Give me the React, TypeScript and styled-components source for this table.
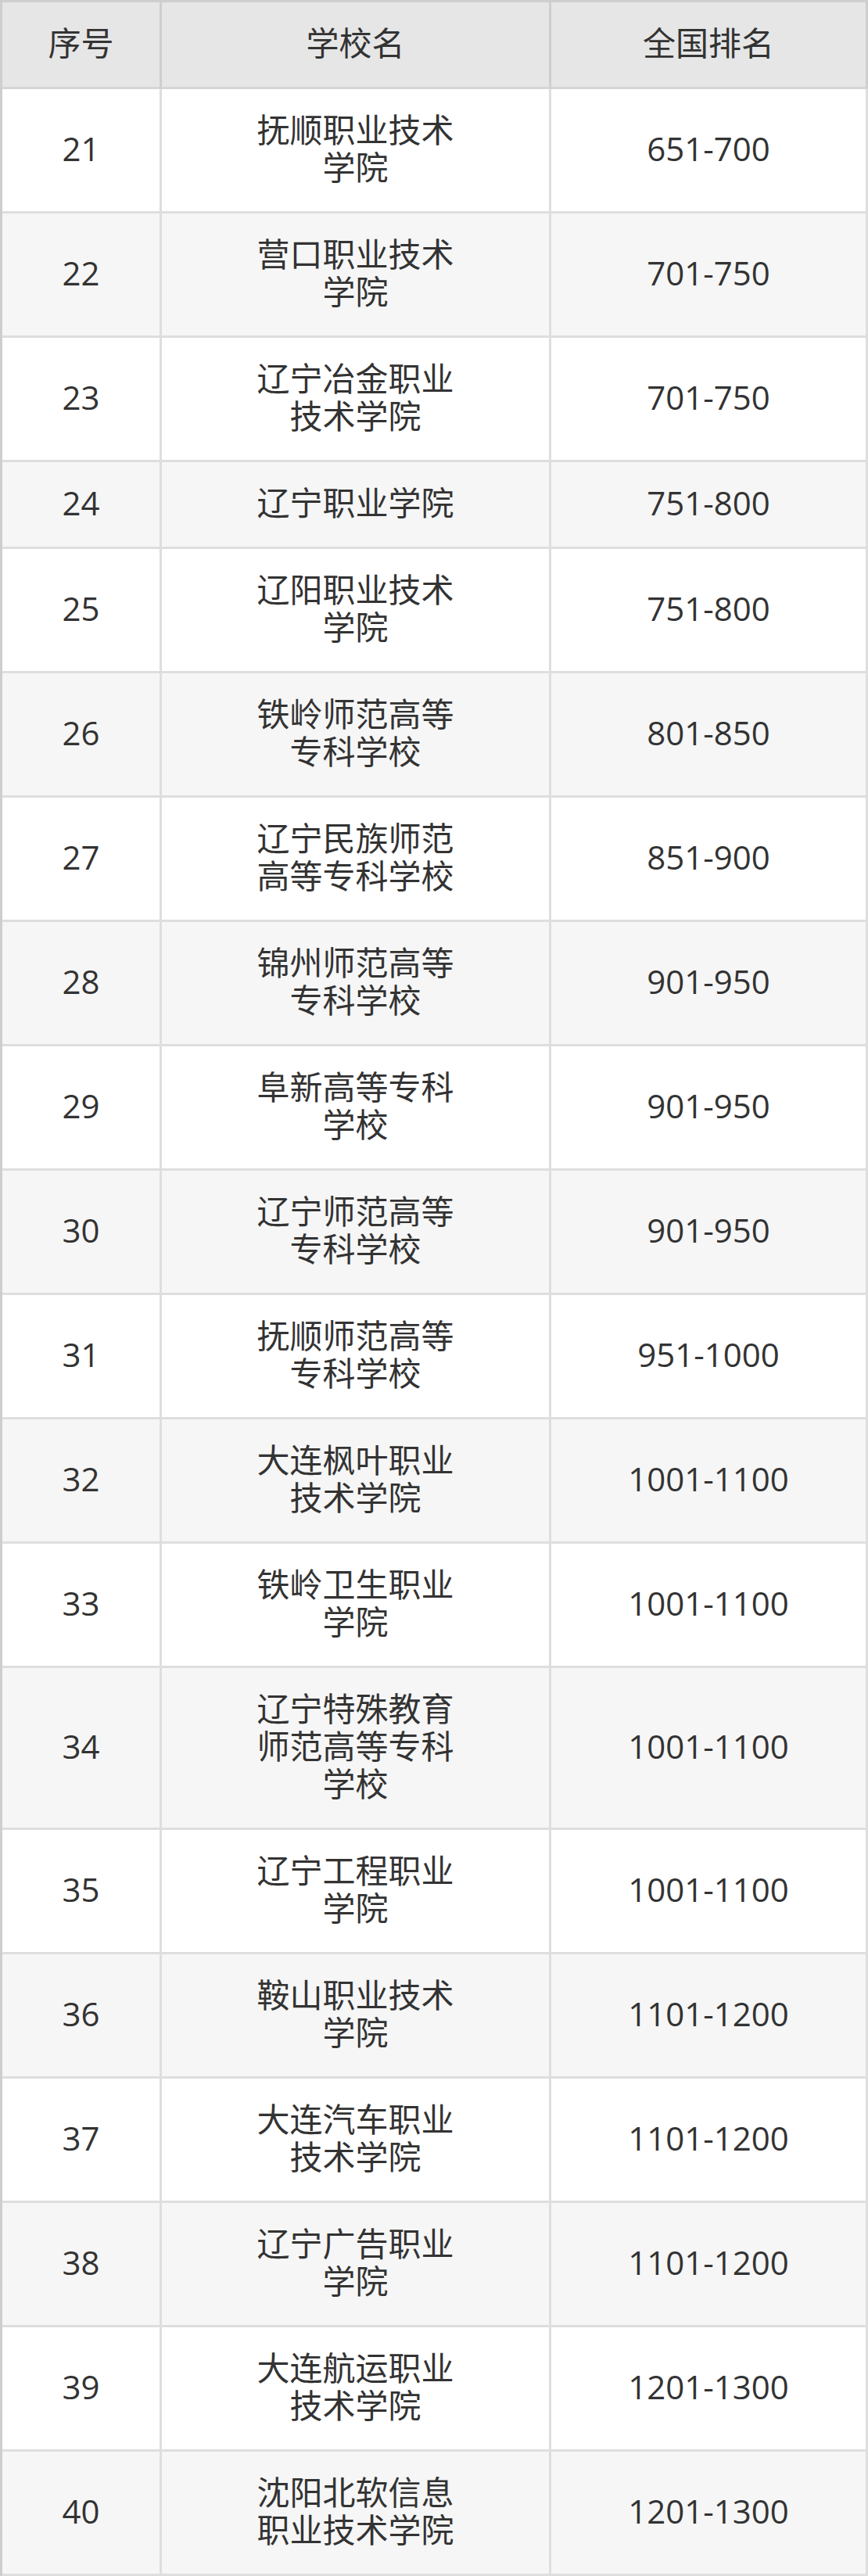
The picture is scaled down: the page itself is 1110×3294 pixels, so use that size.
import styled, { createGlobalStyle } from "styled-components";

interface IRow {
    no: number;
    name: string;
    rank: string;
}

const rows: IRow[] = [
    { no: 21, name: '抚顺职业技术学院', rank: '651-700' },
    { no: 22, name: '营口职业技术学院', rank: '701-750' },
    { no: 23, name: '辽宁冶金职业技术学院', rank: '701-750' },
    { no: 24, name: '辽宁职业学院', rank: '751-800' },
    { no: 25, name: '辽阳职业技术学院', rank: '751-800' },
    { no: 26, name: '铁岭师范高等专科学校', rank: '801-850' },
    { no: 27, name: '辽宁民族师范高等专科学校', rank: '851-900' },
    { no: 28, name: '锦州师范高等专科学校', rank: '901-950' },
    { no: 29, name: '阜新高等专科学校', rank: '901-950' },
    { no: 30, name: '辽宁师范高等专科学校', rank: '901-950' },
    { no: 31, name: '抚顺师范高等专科学校', rank: '951-1000' },
    { no: 32, name: '大连枫叶职业技术学院', rank: '1001-1100' },
    { no: 33, name: '铁岭卫生职业学院', rank: '1001-1100' },
    { no: 34, name: '辽宁特殊教育师范高等专科学校', rank: '1001-1100' },
    { no: 35, name: '辽宁工程职业学院', rank: '1001-1100' },
    { no: 36, name: '鞍山职业技术学院', rank: '1101-1200' },
    { no: 37, name: '大连汽车职业技术学院', rank: '1101-1200' },
    { no: 38, name: '辽宁广告职业学院', rank: '1101-1200' },
    { no: 39, name: '大连航运职业技术学院', rank: '1201-1300' },
    { no: 40, name: '沈阳北软信息职业技术学院', rank: '1201-1300' },
];

export default function App() {
    return (
        <>
            <GlobalStyle />
            <Table>
                <colgroup>
                    <col style={{ width: 204 }} />
                    <col style={{ width: 498 }} />
                    <col />
                </colgroup>
                <thead>
                    <tr>
                        <Th>序号</Th>
                        <Th>学校名</Th>
                        <Th>全国排名</Th>
                    </tr>
                </thead>
                <tbody>
                    {rows.map((r, i) => (
                        <Tr key={r.no} striped={i % 2 === 1}>
                            <Td>{r.no}</Td>
                            <NameTd>{r.name}</NameTd>
                            <Td>{r.rank}</Td>
                        </Tr>
                    ))}
                </tbody>
            </Table>
        </>
    )
}

const GlobalStyle = createGlobalStyle`
  body {
    margin: 0;
    background: #fff;
    font-family: "Open Sans", "Noto Sans CJK SC", sans-serif;
    color: #333;
  }
`

const Table = styled.table`
    width: 1110px;
    table-layout: fixed;
    border-collapse: separate;
    border-spacing: 0;
    border-top: 3px solid #cecece;
    border-left: 3px solid #cecece;
    box-sizing: border-box;
    font-size: 42px;
    line-height: 48px;
`

const Th = styled.th`
    background: #e6e6e6;
    font-weight: normal;
    padding: 28px 0 32px;
    text-align: center;
    border-right: 3px solid #cecece;
    border-bottom: 3px solid #d6d6d6;
`

const Tr = styled.tr<{ striped: boolean }>`
    background: ${(props) => props.striped ? '#f6f6f6' : '#fff'};
`

const Td = styled.td`
    padding: 28px 0 32px;
    text-align: center;
    vertical-align: middle;
    border-right: 3px solid #dedede;
    border-bottom: 3px solid #dedede;
`

const NameTd = styled(Td)`
    padding: 28px 108px 32px;
`
